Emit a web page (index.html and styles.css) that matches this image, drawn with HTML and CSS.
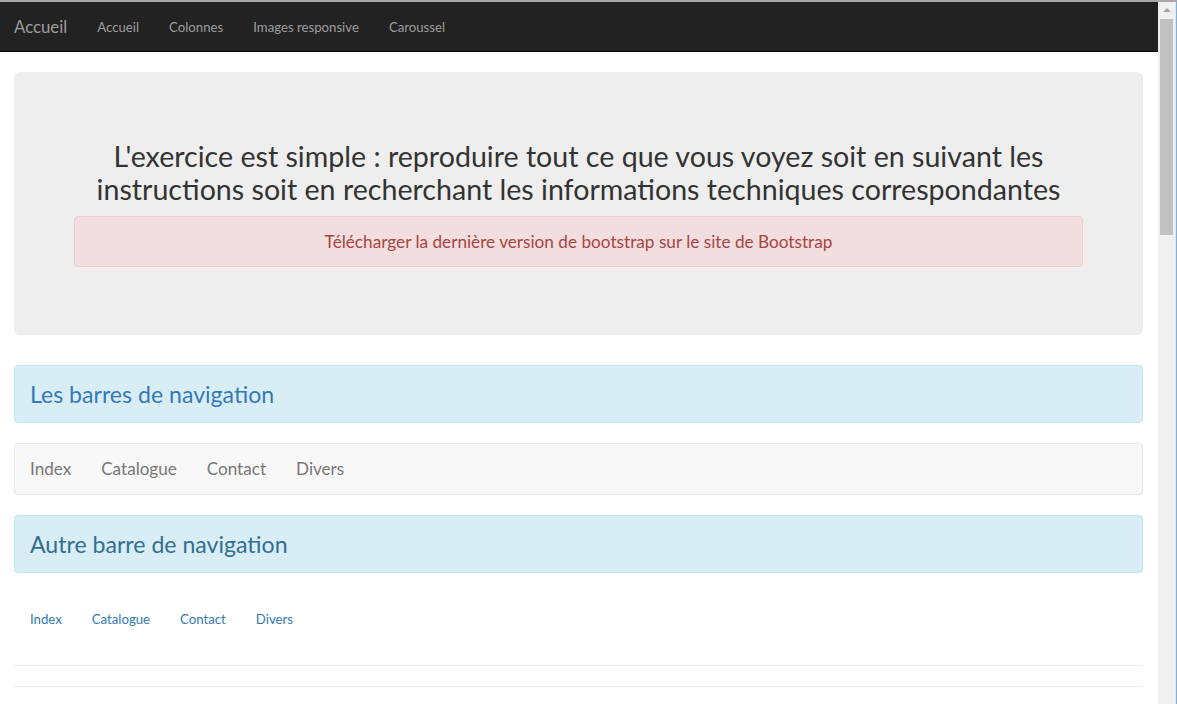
FILE: index.html
```html
<!DOCTYPE html>
<html lang="fr">
<head>
<meta charset="utf-8">
<title>Exercice Bootstrap</title>
<link rel="stylesheet" href="styles.css">
</head>
<body>
<div class="window">
  <div class="page">
    <nav class="topbar">
      <a class="brand" href="#">Accueil</a>
      <ul class="topnav">
        <li><a href="#">Accueil</a></li>
        <li><a href="#">Colonnes</a></li>
        <li><a href="#">Images responsive</a></li>
        <li><a href="#">Caroussel</a></li>
      </ul>
    </nav>
    <div class="container">
      <div class="jumbotron">
        <h1 class="jumbo-title">L'exercice est simple : reproduire tout ce que vous voyez soit en suivant les instructions soit en recherchant les informations techniques correspondantes</h1>
        <div class="alert-danger">Télécharger la dernière version de bootstrap sur le site de Bootstrap</div>
      </div>
      <div class="alert-info"><h3 class="info-title link-title">Les barres de navigation</h3></div>
      <nav class="navbar-default">
        <a href="#">Index</a>
        <a href="#">Catalogue</a>
        <a href="#">Contact</a>
        <a href="#">Divers</a>
      </nav>
      <div class="alert-info"><h3 class="info-title">Autre barre de navigation</h3></div>
      <nav class="simple-nav">
        <a href="#">Index</a>
        <a href="#">Catalogue</a>
        <a href="#">Contact</a>
        <a href="#">Divers</a>
      </nav>
      <hr class="rule">
      <hr class="rule">
    </div>
  </div>
  <div class="scrollbar">
    <div class="arrow"></div>
    <div class="thumb"></div>
  </div>
  <div class="edge"></div>
</div>
</body>
</html>
```

FILE: styles.css
```css
* { box-sizing: border-box; }
html, body { margin: 0; padding: 0; height: 100%; overflow: hidden; }
body {
  font-family: "Lato", "Open Sans", sans-serif;
  color: #333;
  background: #fff;
  border-top: 2px solid #a8a8a8;
}
a { text-decoration: none; }
.window { display: flex; height: 702px; }
.page { width: 1158px; flex: none; }
.topbar {
  height: 50px;
  background: #222;
  border-bottom: 1px solid #080808;
  display: flex;
  align-items: center;
}
.brand {
  color: #9d9d9d;
  font-size: 16.8px;
  padding: 0 15px 0 14px;
  line-height: 50px;
}
.topnav { display: flex; list-style: none; margin: 0; padding: 0; }
.topnav a {
  display: block;
  color: #9d9d9d;
  font-size: 13.2px;
  padding: 0 15px;
  line-height: 50px;
}
.container { padding: 20px 15px 0 14px; }
.jumbotron {
  background: #eee;
  border-radius: 6px;
  padding: 48px 60px;
  margin-bottom: 30px;
}
.jumbo-title {
  margin: 20px 0 10px;
  text-align: center;
  font-weight: 400;
  font-size: 28.6px;
  line-height: 33px;
  color: #333;
}
.alert-danger {
  background: #f2dede;
  border: 1px solid #ebccd1;
  color: #a94442;
  border-radius: 4px;
  padding: 15px;
  font-size: 17.2px;
  line-height: 19px;
  text-align: center;
  margin-bottom: 20px;
}
.alert-info {
  background: #d9edf7;
  border: 1px solid #bce8f1;
  border-radius: 4px;
  padding: 15px;
  margin-bottom: 20px;
}
.info-title {
  margin: 0;
  font-weight: 400;
  font-size: 23.1px;
  line-height: 26px;
  color: #31708f;
}
.link-title { color: #337ab7; }
.navbar-default {
  background: #f8f8f8;
  border: 1px solid #e7e7e7;
  border-radius: 4px;
  height: 52px;
  display: flex;
  align-items: center;
  margin-bottom: 20px;
}
.navbar-default a {
  color: #777;
  font-size: 17.1px;
  padding: 0 15px;
  line-height: 50px;
}
.simple-nav {
  display: flex;
  padding: 16px 0 0 1px;
  height: 72px;
}
.simple-nav a {
  color: #337ab7;
  font-size: 13.2px;
  line-height: 20px;
  padding: 0 15px;
}
.rule {
  border: 0;
  border-top: 1px solid #eee;
  margin: 0 0 20px;
  height: 0;
}
.scrollbar {
  width: 17px;
  flex: none;
  background: #f0f0f0;
}
.arrow {
  margin: 6px auto 0;
  width: 0; height: 0;
  border-left: 4px solid transparent;
  border-right: 4px solid transparent;
  border-bottom: 4px solid #a3a3a3;
}
.thumb {
  margin: 7px 2px 0;
  height: 216px;
  background: #c1c1c1;
}
.edge {
  width: 2px;
  flex: none;
  background: linear-gradient(to right, #dfe7ef 50%, #86aedb 50%);
}
```
